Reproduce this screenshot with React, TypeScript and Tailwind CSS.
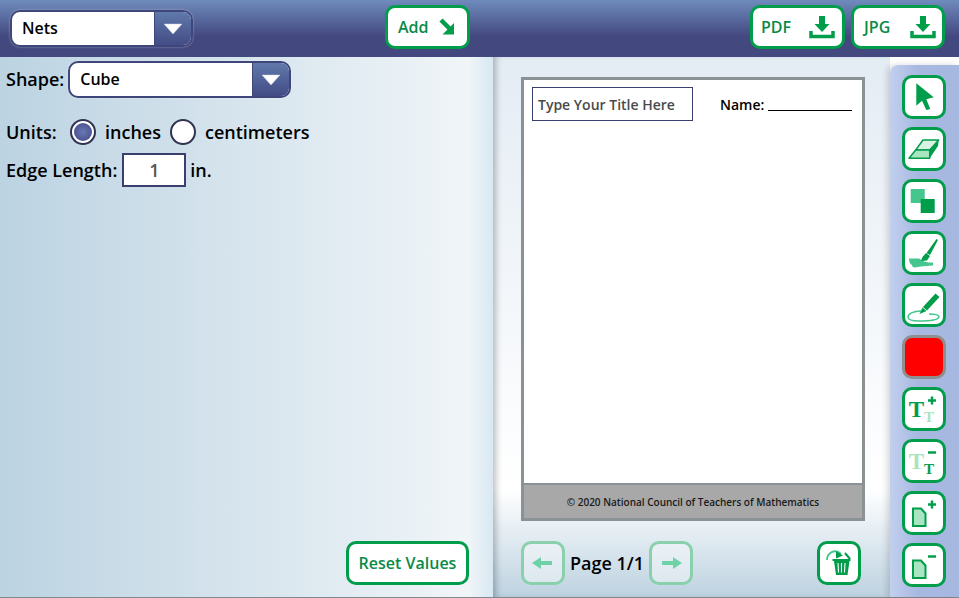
import type { ReactNode } from "react";

const GREEN = "#009d4b";
const LIGHT = "#45c68f";
const PALE = "#a8e5c0";

function IconButton({ children, faded }: { children: ReactNode; faded?: boolean }) {
  return (
    <button
      className={
        faded
          ? "w-11 h-11 box-border rounded-[10px] border-[3px] border-[#8bd0ac] bg-white/40 flex items-center justify-center"
          : "w-11 h-11 box-border rounded-[10px] border-[3px] border-[#009d4b] bg-white flex items-center justify-center"
      }
    >
      <svg viewBox="3 3 38 38" width="38" height="38">
        {children}
      </svg>
    </button>
  );
}

function TextButton({ children, className }: { children: ReactNode; className: string }) {
  return (
    <button
      className={`h-11 box-border rounded-[10px] border-[3px] border-[#009d4b] bg-white text-[#0a8a47] text-[16px] font-semibold flex items-center ${className}`}
    >
      {children}
    </button>
  );
}

function DownloadIcon() {
  return (
    <svg width="26" height="24" viewBox="0 0 26 24">
      <path d="M10 1h6v8h4.500l-7.500 8-7.500-8H10z" fill={GREEN} />
      <path d="M2 16v5.500h22V16" fill="none" stroke={GREEN} strokeWidth="3.500" />
    </svg>
  );
}

function Select({ label, width }: { label: string; width: string }) {
  return (
    <div className={`${width} h-[37px] box-border rounded-[10px] border-2 border-[#3f4679] bg-white flex overflow-hidden shadow-[0_0_2px_#ffffff80]`}>
      <div className="flex-1 flex items-center pl-[10px] pb-[2px] text-[16px] font-semibold text-black">{label}</div>
      <div className="w-[37px] border-l border-[#3f4679] bg-gradient-to-b from-[#6079ab] to-[#434c85] flex items-center justify-center">
        <svg width="20" height="12" viewBox="0 0 20 12">
          <path d="M1 1h18l-9 10z" fill="white" stroke="#c8d0e0" strokeWidth="0.500" />
        </svg>
      </div>
    </div>
  );
}

function Radio({ checked }: { checked?: boolean }) {
  return (
    <div className="w-[26px] h-[26px] box-border rounded-full border-2 border-[#2f3350] bg-white flex items-center justify-center">
      {checked && <div className="w-[18px] h-[18px] rounded-full bg-[radial-gradient(circle,#6a78b4,#3f4685)]" />}
    </div>
  );
}

function PlusMinus({ minus, y = 13.500, x = 30 }: { minus?: boolean; y?: number; x?: number }) {
  return (
    <g stroke={GREEN} strokeWidth="2.500">
      <path d={`M${x - 4} ${y}h8`} />
      {!minus && <path d={`M${x} ${y - 4}v8`} />}
    </g>
  );
}

function PageIcon({ minus }: { minus?: boolean }) {
  return (
    <>
      <path d="M11 17.500h8l4.500 5V35H11z" fill={PALE} stroke={GREEN} strokeWidth="2" />
      <PlusMinus minus={minus} />
    </>
  );
}

function TextSize({ shrink }: { shrink?: boolean }) {
  return (
    <>
      <text x="14.500" y="30" textAnchor="middle" className="font-['Liberation_Serif',serif] font-bold text-[23px]" fill={shrink ? PALE : GREEN}>
        T
      </text>
      <text x="27" y="34.500" textAnchor="middle" className="font-['Liberation_Serif',serif] font-bold text-[15px]" fill={shrink ? GREEN : PALE}>
        T
      </text>
      <PlusMinus minus={shrink} />
    </>
  );
}

export default function App() {
  return (
    <div className="w-[959px] h-[598px] overflow-hidden flex flex-col font-['Open_Sans',sans-serif] text-black">
      {/* top bar */}
      <div className="h-[57px] shrink-0 flex items-center bg-gradient-to-b from-[#6f8bbc] via-[#43487f] via-65% to-[#43487f]">
        <div className="ml-[10px]">
          <Select label="Nets" width="w-[183px]" />
        </div>
        <TextButton className="ml-[192px] w-[85px] pl-[10px] gap-[9px] mt-[-3px]">
          <span>Add</span>
          <svg width="18" height="18" viewBox="0 0 18 18">
            <path d="M3 2l9 9" stroke={GREEN} strokeWidth="4.500" />
            <path d="M16 5v11.500H4.500z" fill={GREEN} />
          </svg>
        </TextButton>
        <TextButton className="ml-[280px] w-[95px] pl-[8px] justify-between pr-[7px] mt-[-3px]">
          <span>PDF</span>
          <DownloadIcon />
        </TextButton>
        <TextButton className="ml-[6px] w-[94px] pl-[10px] justify-between pr-[6px] mt-[-3px]">
          <span>JPG</span>
          <DownloadIcon />
        </TextButton>
      </div>

      <div className="flex-1 flex min-h-0 border-b border-[#7f8a90]">
        {/* left controls */}
        <div className="w-[493px] shrink-0 flex flex-col pl-[6px] pr-[24px] bg-gradient-to-r from-[#bcd3e2] via-[#f0f5f8] via-[95%] to-[#d8e8f2] text-[18px] font-semibold">
          <div className="flex items-center gap-[4px] mt-[4px]">
            <span>Shape:</span>
            <Select label="Cube" width="w-[223px]" />
          </div>
          <div className="flex items-center mt-[21px] h-[26px]">
            <span className="w-[64px]">Units:</span>
            <Radio checked />
            <span className="ml-[9px] mr-[9px]">inches</span>
            <Radio />
            <span className="ml-[9px]">centimeters</span>
          </div>
          <div className="flex items-center mt-[8px]">
            <span>Edge Length:</span>
            <div className="ml-[5px] w-[64px] h-[34px] box-border border-2 border-[#3a3f70] bg-white flex items-center justify-center text-[#555]">1</div>
            <span className="ml-[4px]">in.</span>
          </div>
          <div className="mt-auto mb-[12px] self-end">
            <TextButton className="w-[123px] justify-center">Reset Values</TextButton>
          </div>
        </div>

        {/* worksheet */}
        <div className="flex-1 flex flex-col pl-[28px] pr-[25px] pt-[20px] bg-gradient-to-b from-[#e4ecf4] via-white via-[80%] to-[#bdd2e0] shadow-[inset_6px_0_6px_-3px_#00000040]">
          <div className="w-[344px] h-[444px] box-border border-[3px] border-[#8a9296] bg-white flex flex-col">
            <div className="flex items-center pl-[8px] pt-[7px]">
              <div className="w-[161px] h-[34px] box-border border border-[#3a3f70] pl-[5px] flex items-center whitespace-nowrap text-[14px] font-semibold text-[#4a4a4a]">
                Type Your Title Here
              </div>
              <div className="ml-[27px] text-[14px] font-semibold flex">
                <span>Name:</span>
                <span className="ml-[4px] w-[84px] border-b border-black h-[17px]" />
              </div>
            </div>
            <div className="mt-auto h-[35px] pt-[1px] bg-[#a8a8a8] border-t-2 border-[#8a9296] flex items-center justify-center text-[10px] font-semibold text-[#1a1a1a]">
              © 2020 National Council of Teachers of Mathematics
            </div>
          </div>
          <div className="flex items-center mt-[20px]">
            <IconButton faded>
              <path d="M11 22l9-6v4h11v4H20v4z" fill="#6fd1a8" />
            </IconButton>
            <span className="mx-[5px] text-[18px] font-semibold">Page 1/1</span>
            <IconButton faded>
              <path d="M33 22l-9-6v4H13v4h11v4z" fill="#6fd1a8" />
            </IconButton>
            <div className="ml-auto mr-[4px]">
              <IconButton>
                <path d="M10 19c0-7 8-12 14-6" fill="none" stroke={LIGHT} strokeWidth="1.800" />
                <path d="M19 10l7 4.500-7 3z" fill={GREEN} />
                <path d="M28 12l5 6" stroke={GREEN} strokeWidth="2" />
                <path d="M15.500 18h18v2h-1l-2 14H19l-2-14h-1.500z" fill={GREEN} />
                <path d="M21 22l.5 9.500M24.500 22v9.500M28 22l-.5 9.500" stroke="white" strokeWidth="1.100" />
              </IconButton>
            </div>
          </div>
        </div>

        {/* tool strip */}
        <div className="w-[69px] shrink-0 mt-[8px] rounded-tl-[8px] bg-gradient-to-r from-[#c2d0ee] via-[#a8b9e1] via-40% to-[#a6b7e0] shadow-[-3px_0_6px_#00000025] pl-[12px] pt-[10px] flex flex-col gap-[8px]">
          <IconButton>
            <path d="M14.300 8.300v22.400l5.700-5 4.300 9.300 4-1-4-9.700 7.400-2z" fill={GREEN} />
          </IconButton>
          <IconButton>
            <path d="M21 13h15.700l-9 10H13.700z" fill="#d8f3e3" stroke={GREEN} strokeWidth="1.500" strokeLinejoin="round" />
            <path d="M13.700 23h14v8.300H7z" fill={PALE} stroke={GREEN} strokeWidth="1.500" strokeLinejoin="round" />
            <path d="M36.700 13l-.7 6-8.300 12.300V23z" fill={GREEN} />
          </IconButton>
          <IconButton>
            <rect x="8.700" y="10" width="14" height="14" fill={LIGHT} />
            <rect x="18.700" y="20" width="14" height="14" fill={GREEN} />
          </IconButton>
          <IconButton>
            <path d="M7 27.500h10l5 3c3 1 6 1 9 1v3c-6 0-13 1-18 2-2 0-3-1-3-2.500-2-1-3-3-3-6.500z" fill={LIGHT} />
            <path d="M34.500 8l1.500 1-8 15-3.500-2z" fill={GREEN} />
            <path d="M24 22l4 3-3 4.500-6 .5 1.500-4z" fill={GREEN} />
          </IconButton>
          <IconButton>
            <path d="M19 28c-8 0-13 3-13 6 0 3 5 4 11 4 9 0 19-1 20-4 0-2-4-3-10-3" fill="none" stroke={LIGHT} strokeWidth="1.500" />
            <path d="M33.500 10.500l4 3.500L25 27.500 21 24z" fill={GREEN} />
            <path d="M20.500 24.500l4 3.500-7 3z" fill={GREEN} />
          </IconButton>
          <div className="w-11 h-11 box-border rounded-[10px] border-[3px] border-[#8f8f8f] bg-[#ff0000]" />
          <IconButton>
            <TextSize />
          </IconButton>
          <IconButton>
            <TextSize shrink />
          </IconButton>
          <IconButton>
            <PageIcon />
          </IconButton>
          <IconButton>
            <PageIcon minus />
          </IconButton>
        </div>
      </div>
    </div>
  );
}
